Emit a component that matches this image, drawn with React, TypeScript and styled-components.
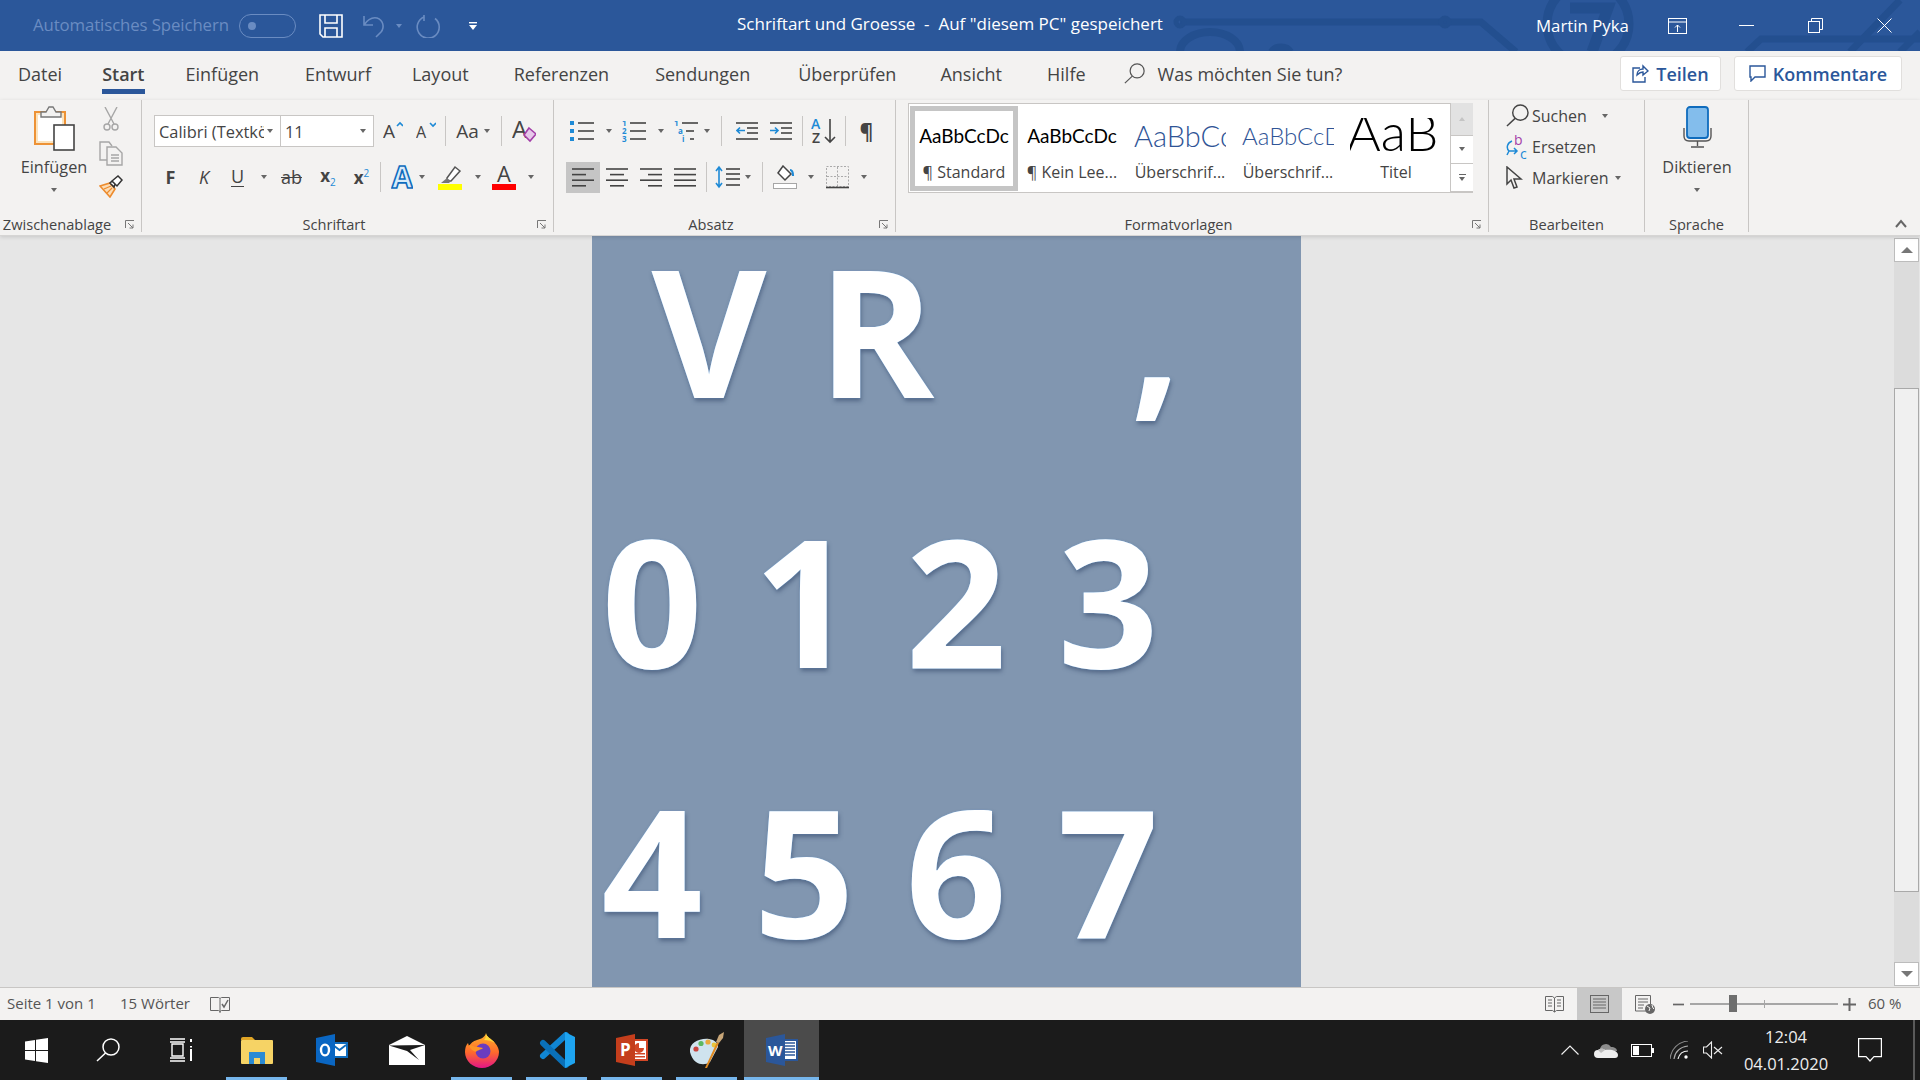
import { FC, ReactNode } from "react";
import styled, { createGlobalStyle } from "styled-components";

const UI_FONT = `"Open Sans", "Noto Sans", sans-serif`;
const BLUE = "#2b579a";
const INK = "#444444";
const ACCENT = "#1e8ad6";

const GlobalStyle = createGlobalStyle`
  html, body { margin: 0; padding: 0; height: 100%; overflow: hidden; background: #e6e6e6; }
  * { box-sizing: border-box; }
  svg { display: block; }
`;

const Window = styled.div`
  width: 1920px;
  height: 1080px;
  display: flex;
  flex-direction: column;
  font-family: ${UI_FONT};
  color: ${INK};
  overflow: hidden;
`;

/* ---------- shared bits ---------- */

const Tool = styled.span<{ $w: number; $ml?: number }>`
  flex: none;
  width: ${({ $w }) => $w}px;
  margin-left: ${({ $ml }) => $ml ?? 0}px;
  display: flex;
  justify-content: center;
  align-items: center;
`;

const Caret = styled.i<{ $ml?: number; $color?: string }>`
  flex: none;
  display: block;
  width: 0;
  height: 0;
  margin-left: ${({ $ml }) => $ml ?? 0}px;
  border-left: 3.5px solid transparent;
  border-right: 3.5px solid transparent;
  border-top: 4px solid ${({ $color }) => $color ?? "#666"};
`;

const Sep = styled.i<{ $ml: number; $h?: number }>`
  flex: none;
  display: block;
  width: 1px;
  height: ${({ $h }) => $h ?? 30}px;
  margin-left: ${({ $ml }) => $ml}px;
  background: #c8c6c4;
`;

/* ---------- title bar ---------- */

const TitleBar = styled.header`
  position: relative;
  flex: none;
  height: 51px;
  background: ${BLUE};
  color: #fff;
  display: flex;
  align-items: center;
  overflow: hidden;
`;

const Circuit = styled.svg`
  position: absolute;
  left: 0;
  top: 0;
`;

const AutoSave = styled.span`
  position: relative;
  top: -1px;
  margin-left: 33px;
  width: 198px;
  font-size: 16.8px;
  letter-spacing: -0.1px;
  color: #6a8cc2;
  white-space: nowrap;
`;

const Toggle = styled.span`
  position: relative;
  flex: none;
  width: 57px;
  height: 24px;
  margin-left: 8px;
  border: 1px solid #6a8cc2;
  border-radius: 12px;
  display: flex;
  align-items: center;
  padding-left: 8px;
  &::before {
    content: "";
    width: 8px;
    height: 8px;
    border-radius: 50%;
    background: #6a8cc2;
  }
`;

const QuickTools = styled.div`
  position: relative;
  display: flex;
  align-items: center;
`;

const DocTitle = styled.span`
  position: absolute;
  left: 737px;
  top: 13px;
  font-size: 17px;
  line-height: 22px;
  white-space: pre;
`;

const WindowTools = styled.div`
  position: relative;
  margin-left: auto;
  padding-right: 28px;
  display: flex;
  align-items: center;
`;

const UserName = styled.span`
  width: 92px;
  font-size: 16.8px;
  white-space: nowrap;
`;

/* ---------- tabs ---------- */

const TabRow = styled.nav`
  flex: none;
  height: 49px;
  background: #f3f2f1;
  display: flex;
  align-items: center;
  padding-left: 18px;
  font-size: 18px;
`;

const Tab = styled.span<{ $ml?: number; $active?: boolean }>`
  position: relative;
  margin-left: ${({ $ml }) => $ml ?? 0}px;
  white-space: nowrap;
  line-height: 24px;
  top: -2px;
  font-weight: ${({ $active }) => ($active ? 600 : 400)};
  ${({ $active }) =>
    $active &&
    `&::after {
      content: "";
      position: absolute;
      left: 0;
      right: 0;
      bottom: -8px;
      height: 5px;
      background: ${BLUE};
    }`}
`;

const SearchHint = styled.span`
  position: relative;
  top: -2px;
  display: flex;
  align-items: center;
  margin-left: 38px;
  gap: 13px;
  white-space: nowrap;
`;

const TabActions = styled.div`
  margin-left: auto;
  margin-bottom: 4px;
  padding-right: 18px;
  display: flex;
  gap: 13px;
`;

const ShareButton = styled.span<{ $w: number }>`
  width: ${({ $w }) => $w}px;
  height: 35px;
  background: #fff;
  border: 1px solid #e1dfdd;
  border-radius: 3px;
  display: flex;
  align-items: center;
  justify-content: center;
  gap: 7px;
  color: ${BLUE};
  font-weight: 600;
  font-size: 18px;
  white-space: nowrap;
`;

/* ---------- ribbon ---------- */

const Ribbon = styled.section`
  position: relative;
  z-index: 2;
  flex: none;
  height: 136px;
  background: #f3f2f1;
  display: flex;
  align-items: flex-start;
  border-bottom: 1px solid #d6d5d4;
  box-shadow: 0 1px 4px rgba(0, 0, 0, 0.14);
`;

const Group = styled.div<{ $w: number }>`
  flex: none;
  width: ${({ $w }) => $w}px;
  height: 132px;
  border-right: 1px solid #c8c6c4;
  display: flex;
  flex-direction: column;
`;

const GroupBody = styled.div<{ $pt?: number; $pl?: number; $row?: boolean }>`
  flex: 1;
  min-height: 0;
  padding-top: ${({ $pt }) => $pt ?? 0}px;
  padding-left: ${({ $pl }) => $pl ?? 0}px;
  display: flex;
  flex-direction: ${({ $row }) => ($row ? "row" : "column")};
`;

const GroupLabel = styled.div<{ $launcher?: boolean }>`
  position: relative;
  flex: none;
  height: 18px;
  margin-bottom: -1px;
  padding-right: ${({ $launcher }) => ($launcher ? 27 : 0)}px;
  text-align: center;
  font-size: 14.6px;
  line-height: 18px;
  white-space: nowrap;
`;

const Launcher = styled.svg`
  position: absolute;
  right: 6px;
  top: 5px;
`;

const ToolRow = styled.div<{ $pl?: number; $mt?: number }>`
  height: 32px;
  margin-top: ${({ $mt }) => $mt ?? 0}px;
  padding-left: ${({ $pl }) => $pl ?? 0}px;
  display: flex;
  align-items: center;
`;

const BigButton = styled.div<{ $w: number; $ml?: number }>`
  flex: none;
  width: ${({ $w }) => $w}px;
  margin-left: ${({ $ml }) => $ml ?? 0}px;
  padding-top: 6px;
  display: flex;
  flex-direction: column;
  align-items: center;
  font-size: 16.3px;
`;

const BigIconBox = styled.div`
  height: 46px;
  display: flex;
  align-items: flex-start;
`;

const BigLabel = styled.div`
  line-height: 20px;
  margin-top: 5px;
  margin-bottom: 11px;
  white-space: nowrap;
`;

const SmallColumn = styled.div`
  margin-left: 11px;
  padding-top: 7px;
  display: flex;
  flex-direction: column;
  align-items: center;
  gap: 9px;
`;

const FontBox = styled.span<{ $w: number }>`
  flex: none;
  width: ${({ $w }) => $w}px;
  height: 32px;
  background: #fff;
  border: 1px solid #c8c6c4;
  margin-right: -1px;
  display: flex;
  align-items: center;
  justify-content: space-between;
  padding: 0 7px 0 4px;
  font-size: 16.4px;
  overflow: hidden;
`;

const FontName = styled.span`
  width: 105px;
  overflow: hidden;
  white-space: nowrap;
`;

const ToggleCell = styled.span<{ $w: number; $ml?: number; $on?: boolean }>`
  flex: none;
  width: ${({ $w }) => $w}px;
  height: 31px;
  margin-left: ${({ $ml }) => $ml ?? 0}px;
  background: ${({ $on }) => ($on ? "#c5c5c5" : "transparent")};
  display: flex;
  align-items: center;
  justify-content: center;
`;

const Gallery = styled.div`
  width: 565px;
  height: 90px;
  margin: 3px 0 0 12px;
  background: #fff;
  border: 1px solid #c8c6c4;
  display: flex;
  padding: 2px 0 0 1px;
`;

const StyleCard = styled.div<{ $selected?: boolean }>`
  flex: none;
  width: 108px;
  height: 85px;
  padding: 6px 0;
  border: 5px solid ${({ $selected }) => ($selected ? "#c5c5c5" : "transparent")};
  display: flex;
  flex-direction: column;
  align-items: center;
`;

const StylePreview = styled.div<{ $size: number; $color?: string; $light?: boolean; $title?: boolean }>`
  flex: none;
  width: 92px;
  height: ${({ $title }) => ($title ? 37 : 44)}px;
  margin-top: ${({ $title }) => ($title ? 1 : -3)}px;
  margin-bottom: ${({ $title }) => ($title ? 3 : 0)}px;
  overflow: hidden;
  font-family: Lato, "Open Sans", sans-serif;
  font-size: ${({ $size }) => $size}px;
  font-weight: ${({ $light }) => ($light ? 300 : 400)};
  line-height: ${({ $title }) => ($title ? 27 : 44)}px;
  text-indent: ${({ $title }) => ($title ? -7 : 0)}px;
  color: ${({ $color }) => $color ?? "#000"};
  white-space: nowrap;
  text-align: center;
`;

const StyleName = styled.div`
  font-size: 16px;
  line-height: 20px;
  white-space: nowrap;
  margin-top: 4px;
`;

const GalleryScroll = styled.div`
  flex: none;
  width: 23px;
  margin: -3px -1px 0 auto;
  display: flex;
  flex-direction: column;
  border-left: 1px solid #c8c6c4;
`;

const GalleryArrow = styled.span<{ $h: number; $gray?: boolean }>`
  height: ${({ $h }) => $h}px;
  background: ${({ $gray }) => ($gray ? "#e2e2e2" : "#fff")};
  border-bottom: 1px solid #c8c6c4;
  display: flex;
  flex-direction: column;
  gap: 2px;
  align-items: center;
  justify-content: center;
`;

const UpCaret = styled.i`
  display: block;
  width: 0;
  height: 0;
  border-left: 3.5px solid transparent;
  border-right: 3.5px solid transparent;
  border-bottom: 4px solid #c4c4c4;
`;

const Dash = styled.i`
  display: block;
  width: 7px;
  height: 1px;
  background: #666;
`;

const EditRow = styled.div`
  height: 31px;
  padding-left: 17px;
  display: flex;
  align-items: center;
  font-size: 16px;
  white-space: nowrap;
`;

const EditIcon = styled.span`
  flex: none;
  width: 26px;
`;

const Collapse = styled.svg`
  position: absolute;
  right: 13px;
  bottom: 7px;
`;

/* ---------- document ---------- */

const Workspace = styled.main`
  flex: 1;
  min-height: 0;
  display: flex;
  background: #e6e6e6;
`;

const DocArea = styled.div`
  flex: 1;
  min-width: 0;
  display: flex;
  justify-content: center;
  overflow: hidden;
`;

const Page = styled.article`
  width: 709px;
  height: 100%;
  margin-right: 2px;
  padding: 5px 0 0 10px;
  background: #8196b0;
  overflow: hidden;
  display: flex;
  flex-direction: column;
  gap: 93px;
`;

const GlyphRow = styled.div`
  flex: none;
  height: 177px;
  display: flex;
  font-size: 177px;
  font-weight: 700;
  line-height: 177px;
  color: #fff;
  text-shadow: 0 0 1px #6fb0ee, 1px 3px 4px rgba(45, 65, 100, 0.55);
`;

const Glyph = styled.span<{ $w: number; $ml?: number }>`
  flex: none;
  width: ${({ $w }) => $w}px;
  margin-left: ${({ $ml }) => $ml ?? 0}px;
`;

const ScrollBar = styled.aside`
  flex: none;
  width: 26px;
  padding-top: 2px;
  display: flex;
  flex-direction: column;
`;

const ScrollButton = styled.span`
  width: 25px;
  height: 24px;
  background: #fff;
  border: 1px solid #bcbcbc;
  display: flex;
  align-items: center;
  justify-content: center;
`;

const ScrollTrack = styled.span<{ $h: number }>`
  width: 25px;
  height: ${({ $h }) => $h}px;
  background: #dcdcdc;
`;

const ScrollThumb = styled.span`
  width: 25px;
  height: 504px;
  background: #f0f0f0;
  border: 1px solid #a9a9a9;
`;

const ArrowUp = styled.i`
  border-left: 6px solid transparent;
  border-right: 6px solid transparent;
  border-bottom: 6px solid #777;
`;

const ArrowDown = styled.i`
  border-left: 6px solid transparent;
  border-right: 6px solid transparent;
  border-top: 6px solid #777;
`;

/* ---------- status bar ---------- */

const StatusBar = styled.footer`
  flex: none;
  height: 33px;
  background: #f3f2f1;
  border-top: 1px solid #c8c6c4;
  display: flex;
  align-items: center;
  padding-left: 7px;
  font-size: 15px;
  color: #555;
`;

const StatusText = styled.span<{ $w: number; $ml?: number }>`
  flex: none;
  position: relative;
  top: -1px;
  width: ${({ $w }) => $w}px;
  margin-left: ${({ $ml }) => $ml ?? 0}px;
  white-space: nowrap;
`;

const StatusRight = styled.div`
  margin-left: auto;
  height: 100%;
  display: flex;
  align-items: center;
  padding-right: 16px;
`;

const ActiveView = styled.span`
  flex: none;
  width: 45px;
  height: 100%;
  margin-left: 13px;
  background: #c8c8c8;
  display: flex;
  align-items: center;
  justify-content: center;
`;

const ZoomSlider = styled.span`
  position: relative;
  flex: none;
  width: 148px;
  height: 2px;
  margin-left: 6px;
  background: #a6a6a6;
`;

const ZoomThumb = styled.i`
  position: absolute;
  left: 39px;
  top: -8px;
  width: 8px;
  height: 17px;
  background: #6e6e6e;
`;

const ZoomTick = styled.i`
  position: absolute;
  left: 74px;
  top: -3px;
  width: 1px;
  height: 8px;
  background: #a6a6a6;
`;

/* ---------- task bar ---------- */

const TaskBar = styled.footer`
  flex: none;
  height: 60px;
  background: #1b1b1b;
  display: flex;
  align-items: stretch;
  color: #eee;
`;

const TaskCell = styled.span<{ $w?: number; $open?: boolean; $active?: boolean }>`
  position: relative;
  flex: none;
  width: ${({ $w }) => $w ?? 75}px;
  display: flex;
  align-items: center;
  justify-content: center;
  background: ${({ $active }) => ($active ? "#4b4b4b" : "transparent")};
  ${({ $open, $active }) =>
    $open &&
    `&::after {
      content: "";
      position: absolute;
      bottom: 0;
      height: 3px;
      left: ${$active ? 0 : 7}px;
      right: ${$active ? 0 : 7}px;
      background: #76b6ec;
    }`}
`;

const Tray = styled.div`
  margin-left: auto;
  display: flex;
  align-items: center;
`;

const Clock = styled.div`
  flex: none;
  width: 88px;
  margin-left: 19px;
  text-align: center;
  font-size: 16.5px;
  line-height: 27px;
  white-space: nowrap;
`;

const TrayEdge = styled.i`
  flex: none;
  width: 2px;
  height: 60px;
  margin: 0 5px 0 31px;
  background: #5a5a5a;
`;

/* ---------- drawn icons ---------- */

const Line: FC<{ x1: number; x2: number; y: number; c?: string; w?: number }> = ({ x1, x2, y, c = "#444", w = 1.6 }) => (
  <line x1={x1} x2={x2} y1={y} y2={y} stroke={c} strokeWidth={w} />
);

const SaveIcon = () => (
  <svg width="24" height="24" viewBox="0 0 24 24" fill="none" stroke="#fff" strokeWidth="1.6">
    <path d="M1 1h22v22H4l-3-3z" />
    <path d="M6 1v8h12V1M6 23v-9h12v9" />
  </svg>
);

const UndoIcon = () => (
  <svg width="22" height="24" viewBox="0 0 22 24" fill="none" stroke="#6a8cc2" strokeWidth="1.6">
    <path d="M1 2v9h9M1 11C5 5 9 3 14 4c6 2 8 9 4 14l-5 5" />
  </svg>
);

const RedoIcon = () => (
  <svg width="25" height="24" viewBox="0 0 25 24" fill="none" stroke="#6a8cc2" strokeWidth="1.6">
    <path d="M8 3a11 11 0 1 0 11 1.5" />
    <path d="M8 1v6" />
  </svg>
);

const CustomizeIcon = () => (
  <svg width="8" height="8" viewBox="0 0 8 8" fill="#fff">
    <rect x="0" y="0" width="8" height="1.4" />
    <path d="M0 3h8L4 8z" />
  </svg>
);

const RibbonDisplayIcon = () => (
  <svg width="19" height="16" viewBox="0 0 19 16" fill="none" stroke="#fff" strokeWidth="1">
    <rect x=".5" y=".5" width="18" height="15" />
    <path d="M1 4h17M9.5 14V7M7 9.5l2.5-2.5L12 9.5" />
  </svg>
);

const MinimizeIcon = () => (
  <svg width="15" height="2" viewBox="0 0 15 2"><rect width="15" height="1" fill="#fff" /></svg>
);

const RestoreIcon = () => (
  <svg width="15" height="15" viewBox="0 0 15 15" fill="none" stroke="#fff" strokeWidth="1">
    <rect x=".5" y="3.5" width="11" height="11" />
    <path d="M3.5 3V.5h11v11H12" />
  </svg>
);

const CloseIcon = () => (
  <svg width="15" height="15" viewBox="0 0 15 15" stroke="#fff" strokeWidth="1"><path d="M.5.5l14 14M14.5.5l-14 14" /></svg>
);

const SearchGlyph: FC<{ size: number; c?: string; w?: number }> = ({ size, c = "#555", w = 1.4 }) => (
  <svg width={size} height={size} viewBox="0 0 24 24" fill="none" stroke={c} strokeWidth={w}>
    <circle cx="15" cy="9" r="8" />
    <path d="M9.5 15L1 23" />
  </svg>
);

const ShareIcon = () => (
  <svg width="17" height="19" viewBox="0 0 17 19" fill="none" stroke={BLUE} strokeWidth="1.4">
    <path d="M8 4H1v14h12v-5" />
    <path d="M5 11c0-4 3-6 6-6V2l5 5-5 4V8c-2 0-4 1-6 3z" />
  </svg>
);

const CommentIcon = () => (
  <svg width="17" height="17" viewBox="0 0 17 17" fill="none" stroke={BLUE} strokeWidth="1.4">
    <path d="M1 1h15v11H6l-4 4v-4H1z" />
  </svg>
);

const PasteIcon = () => (
  <svg width="41" height="45" viewBox="0 0 41 45" fill="none">
    <rect x="1" y="6" width="30" height="32" fill="#fbe3bd" stroke="#ed9235" strokeWidth="2" />
    <rect x="4" y="9" width="24" height="26" fill="#fff" />
    <path d="M7 11V6h5l3-5h4l3 5h5v5z" fill="#f3f2f1" stroke="#777" strokeWidth="1.4" />
    <rect x="20" y="19" width="20" height="25" fill="#fff" stroke="#444" strokeWidth="1.6" />
  </svg>
);

const CutIcon = () => (
  <svg width="16" height="25" viewBox="0 0 16 25" fill="none" stroke="#a6a6a6" strokeWidth="1.4">
    <path d="M2 0l9 17M14 0L5 17" />
    <circle cx="4" cy="20" r="3" />
    <circle cx="12" cy="20" r="3" />
  </svg>
);

const CopyIcon = () => (
  <svg width="24" height="25" viewBox="0 0 24 25" fill="none" stroke="#a6a6a6" strokeWidth="1.4">
    <path d="M8 19H1V1h9l3 4" />
    <path d="M8 6h9l6 6v12H8z" />
    <path d="M12 14h8M12 17h8M12 20h8" />
  </svg>
);

const PainterIcon = () => (
  <svg width="24" height="23" viewBox="0 0 24 23">
    <path d="M1 11l10-3 5 6-5 8z" fill="#fbdcb5" stroke="#ed8b2d" strokeWidth="1.6" />
    <path d="M5 14l7-3M8 18l5-5" stroke="#ed8b2d" strokeWidth="1.2" />
    <path d="M11 8l2-2 3 3-1 3zM13 6l6-5 4 4-5 6-2-2" fill="#fff" stroke="#333" strokeWidth="1.5" />
  </svg>
);

const GrowIcon: FC<{ down?: boolean }> = ({ down }) => (
  <svg width="20" height="20" viewBox="0 0 20 20" fill="none">
    <text x="0" y="17" fontFamily={UI_FONT} fontSize={down ? 16 : 19} fill="#444">A</text>
    <path d={down ? "M14 2l3 3 3-3" : "M14 5l3-3 3 3"} stroke={ACCENT} strokeWidth="1.6" />
  </svg>
);

const ClearIcon = () => (
  <svg width="24" height="23" viewBox="0 0 24 23" fill="none">
    <text x="0" y="18" fontFamily={UI_FONT} fontSize="24" fill="#444">A</text>
    <path d="M17 8l7 6-6 7-6-6z" fill="#e6c8ea" stroke="#a33ea8" strokeWidth="1.6" />
  </svg>
);

const BoldGlyph = styled.span`
  font-size: 18px;
  font-weight: 700;
  line-height: 1;
`;

const ItalicGlyph = styled.span`
  font-size: 18px;
  font-style: italic;
  line-height: 1;
`;

const UnderGlyph = styled.span`
  font-size: 18px;
  line-height: 19px;
  border-bottom: 1.5px solid #444;
`;

const StrikeGlyph = styled.span`
  font-size: 18px;
  line-height: 1;
  text-decoration: line-through;
`;

const ScriptGlyph = styled.span`
  font-size: 17px;
  font-weight: 700;
  line-height: 1;
  sub, sup {
    font-size: 10px;
    font-weight: 400;
    color: ${ACCENT};
  }
`;

const CaseGlyph = styled.span`
  font-size: 19px;
  line-height: 1;
`;

const TextEffectIcon = () => (
  <svg width="22" height="25" viewBox="0 0 22 25">
    <text x="11" y="23" textAnchor="middle" fontFamily={UI_FONT} fontWeight="700" fontSize="30" fill="#d8ecfa" stroke="#0f6cbd" strokeWidth="1.6">A</text>
  </svg>
);

const HighlightIcon = () => (
  <svg width="24" height="25" viewBox="0 0 24 25">
    <path d="M9 13L17 2l5 4-9 10H9z" fill="#fff" stroke="#555" strokeWidth="1.5" />
    <path d="M3 18l6-5 4 3-2 2z" fill="#777" />
    <rect y="19" width="24" height="6" fill="#ffff00" />
  </svg>
);

const FontColorIcon = () => (
  <svg width="24" height="25" viewBox="0 0 24 25">
    <text x="12" y="17" textAnchor="middle" fontFamily={UI_FONT} fontSize="22" fill="#444">A</text>
    <rect y="19" width="24" height="6" fill="#ff0000" />
  </svg>
);

const listY = [2, 10, 18];

const BulletIcon = () => (
  <svg width="24" height="20" viewBox="0 0 24 20">
    {listY.map((y) => (
      <g key={y}>
        <rect x="0" y={y - 2} width="4" height="4" fill={ACCENT} />
        <Line x1={8} x2={24} y={y} />
      </g>
    ))}
  </svg>
);

const NumberIcon = () => (
  <svg width="24" height="21" viewBox="0 0 24 21">
    {listY.map((y, i) => (
      <g key={y}>
        <text x="0" y={y + 3} fontFamily={UI_FONT} fontSize="8" fontWeight="700" fill={ACCENT}>{i + 1}</text>
        <Line x1={8} x2={24} y={y} />
      </g>
    ))}
  </svg>
);

const MultiIcon = () => (
  <svg width="25" height="21" viewBox="0 0 25 21">
    {["1", "a", "i"].map((n, i) => (
      <g key={n}>
        <text x={i * 4} y={listY[i] + 3} fontFamily={UI_FONT} fontSize="8" fontWeight="700" fill={ACCENT}>{n}</text>
        <Line x1={8 + i * 4} x2={20 + (i === 0 ? 4 : 0)} y={listY[i]} />
      </g>
    ))}
  </svg>
);

const IndentIcon: FC<{ out?: boolean }> = ({ out }) => (
  <svg width="22" height="20" viewBox="0 0 22 20" fill="none">
    <Line x1={0} x2={22} y={2} />
    <Line x1={11} x2={22} y={7} />
    <Line x1={11} x2={22} y={12} />
    <Line x1={0} x2={22} y={18} />
    <path d={out ? "M9 9.5H1M4 6.5l-3 3 3 3" : "M0 9.5h8M5 6.5l3 3-3 3"} stroke={ACCENT} strokeWidth="1.6" />
  </svg>
);

const SortIcon = () => (
  <svg width="26" height="26" viewBox="0 0 26 26" fill="none">
    <text x="0" y="11" fontFamily={UI_FONT} fontSize="14" fontWeight="600" fill={ACCENT}>A</text>
    <text x="1" y="25" fontFamily={UI_FONT} fontSize="14" fontWeight="600" fill="#444">Z</text>
    <path d="M19 1v23M14 19l5 5 5-5" stroke="#444" strokeWidth="1.6" />
  </svg>
);

const Pilcrow = styled.span`
  font-size: 21px;
  font-weight: 700;
  line-height: 1;
`;

const AlignIcon: FC<{ rows: [number, number][] }> = ({ rows }) => (
  <svg width="22" height="21" viewBox="0 0 22 21">
    {rows.map(([a, b], i) => (
      <Line key={i} x1={a} x2={b} y={2 + i * 5.6} />
    ))}
  </svg>
);

const LineSpacingIcon = () => (
  <svg width="25" height="24" viewBox="0 0 25 24" fill="none">
    <path d="M4 2v20M1 6l3-4 3 4M1 18l3 4 3-4" stroke={ACCENT} strokeWidth="1.6" />
    <Line x1={11} x2={25} y={4} />
    <Line x1={11} x2={25} y={9} />
    <Line x1={11} x2={25} y={14} />
    <Line x1={11} x2={25} y={20} />
  </svg>
);

const ShadingIcon = () => (
  <svg width="24" height="24" viewBox="0 0 24 24" fill="none">
    <path d="M10 1l8 8-6 6-7-7z" fill="#fff" stroke="#444" strokeWidth="1.5" />
    <path d="M17 5c3 0 3 3 3 6" stroke={ACCENT} strokeWidth="2.2" />
    <rect x=".5" y="18.5" width="23" height="5" fill="#fff" stroke="#a6a6a6" />
  </svg>
);

const BordersIcon = () => (
  <svg width="23" height="24" viewBox="0 0 23 24" fill="none">
    <rect x=".5" y="1.5" width="22" height="20" stroke="#aaa" strokeDasharray="2 1.5" />
    <path d="M11.5 2v20M1 11.5h21" stroke="#aaa" strokeDasharray="2 1.5" />
    <path d="M0 22.5h23" stroke="#444" strokeWidth="1.6" />
  </svg>
);

const ReplaceIcon = () => (
  <svg width="23" height="24" viewBox="0 0 23 24" fill="none">
    <text x="8" y="10" fontFamily={UI_FONT} fontSize="14" fill="#a33ea8">b</text>
    <text x="14" y="24" fontFamily={UI_FONT} fontSize="14" fill={ACCENT}>c</text>
    <path d="M6 6C1 8 0 13 3 16l8 0M8 13l3 3-3 3M3 16l-2 4" stroke={ACCENT} strokeWidth="1.5" />
  </svg>
);

const CursorIcon = () => (
  <svg width="17" height="23" viewBox="0 0 17 23" fill="none" stroke="#444" strokeWidth="1.5">
    <path d="M1 1v17l4-4 3 8 3-1-3-8h7z" />
  </svg>
);

const MicIcon = () => (
  <svg width="29" height="42" viewBox="0 0 29 42" fill="none">
    <rect x="4" y="1" width="21" height="31" rx="3" fill="#83bdec" stroke="#0f6cbd" strokeWidth="1.8" />
    <path d="M1 22v8c0 3 2 5 5 5h17c3 0 5-2 5-5v-8" stroke="#555" strokeWidth="1.4" />
    <path d="M14.5 35v5M8 41h13" stroke="#555" strokeWidth="1.4" />
  </svg>
);

const ReadIcon = () => (
  <svg width="19" height="18" viewBox="0 0 19 18" fill="none" stroke="#666" strokeWidth="1">
    <path d="M.5 1.5h7l2 1.5 2-1.5h7v14h-7l-2 1.5-2-1.5h-7zM9.5 3v14" />
    <path d="M3 5h4M3 8h4M3 11h4M12 5h4M12 8h4M12 11h4" />
  </svg>
);

const PrintIcon = () => (
  <svg width="19" height="18" viewBox="0 0 19 18" fill="none" stroke="#666" strokeWidth="1">
    <rect x=".5" y=".5" width="18" height="17" />
    <path d="M3 4h13M3 7h13M3 10h13M3 13h13" />
  </svg>
);

const WebIcon = () => (
  <svg width="20" height="19" viewBox="0 0 20 19" fill="none">
    <path d="M11 16H.5V.5h15V9M3 4h10M3 7h10M3 10h6M3 13h5" stroke="#666" strokeWidth="1" />
    <circle cx="15" cy="14" r="5" fill="#666" />
    <path d="M12 11l3 2-1 3M17 10l1 3 1 1" stroke="#f3f2f1" strokeWidth="1" />
  </svg>
);

const ProofIcon = () => (
  <svg width="20" height="19" viewBox="0 0 20 19" fill="none" stroke="#666" strokeWidth="1">
    <path d="M.5 2.5h8l1.5 1 1.5-1h8v13h-8l-1.5 1-1.5-1h-8zM10 4v14" />
    <path d="M12 9l2 3 4-7" strokeWidth="1.5" />
  </svg>
);

const PlusMinus: FC<{ plus?: boolean }> = ({ plus }) => (
  <svg width="13" height="13" viewBox="0 0 13 13" stroke="#666" strokeWidth="2">
    <path d="M0 6.5h13" />
    {plus && <path d="M6.5 0v13" />}
  </svg>
);

const WindowsLogo = () => (
  <svg width="23" height="25" viewBox="0 0 23 25" fill="#fff">
    <path d="M0 3.5l10-1.5v10H0zM11 1.8L23 0v12H11zM0 13h10v10L0 21.500zM11 13h12v12l-12-1.800z" />
  </svg>
);

const TaskViewIcon = () => (
  <svg width="23" height="24" viewBox="0 0 23 24" fill="none" stroke="#fff" strokeWidth="1.4">
    <path d="M0 1h15M0 23h15M2 6h11v12H2zM0 4h15M0 20h15" />
    <path d="M21 1v3M21 8v1.500M21 11v12" strokeWidth="2" />
  </svg>
);

const ExplorerIcon = () => (
  <svg width="32" height="27" viewBox="0 0 32 27">
    <path d="M0 2a2 2 0 0 1 2-2h9l3 3H0z" fill="#e0a526" />
    <rect y="3" width="32" height="24" rx="1" fill="#f6d365" />
    <path d="M8 27V15h16v12h-5v-6h-6v6z" fill="#2a8ad4" />
  </svg>
);

const OutlookIcon = () => (
  <svg width="32" height="32" viewBox="0 0 32 32">
    <rect x="15" y="8" width="17" height="16" fill="#0f6cbd" />
    <rect x="17" y="10" width="13" height="12" fill="#fff" />
    <path d="M17 11l6.500 5 6.500-5" stroke="#0f6cbd" strokeWidth="1.8" fill="none" />
    <path d="M0 4l19-4v32L0 28z" fill="#0a66c2" />
    <ellipse cx="9" cy="16" rx="4" ry="5.400" fill="none" stroke="#fff" strokeWidth="2.400" />
  </svg>
);

const MailIcon = () => (
  <svg width="36" height="29" viewBox="0 0 36 29">
    <path d="M0 9L18 0l18 9v20H0z" fill="#fff" />
    <path d="M0 9.500L36 9l-15 5 9 10-12-9z" fill="#1b1b1b" />
  </svg>
);

const FirefoxIcon = () => (
  <svg width="34" height="35" viewBox="0 0 34 35">
    <defs>
      <linearGradient id="ffBody" x1="0" y1="0" x2="0" y2="1">
        <stop offset="0" stopColor="#ffb52e" />
        <stop offset=".55" stopColor="#ff6a2b" />
        <stop offset="1" stopColor="#e31587" />
      </linearGradient>
    </defs>
    <path d="M21 0c0 4 5 5 9 10 3 3 4 7 4 9 0 9-8 16-17 16S0 28 0 19c0-4 1-7 3-9l1 3c2-3 4-5 8-6 4-1 8-3 9-7z" fill="url(#ffBody)" />
    <circle cx="18" cy="18" r="7.500" fill="#6a3cc0" />
    <path d="M4 12c3 0 4 2 9 2l5 1c-2 2-6 2-7 4-3-1-6-3-7-7z" fill="#ff9526" />
    <path d="M21 0c0 4 5 5 9 10-3-2-7-3-11-3 2-2 2-4 2-7z" fill="#ffd83b" />
  </svg>
);

const CodeIcon = () => (
  <svg width="36" height="36" viewBox="0 0 36 36" fill="none">
    <path d="M27 3L4 24" stroke="#1085d2" strokeWidth="6" strokeLinecap="round" />
    <path d="M4 11l23 22" stroke="#0a70b8" strokeWidth="6" strokeLinecap="round" />
    <path d="M26 0l10 5v26l-10 5V27L26 9z" fill="#1ea4f0" />
  </svg>
);

const PowerPointIcon = () => (
  <svg width="32" height="32" viewBox="0 0 32 32">
    <rect x="14" y="5" width="18" height="22" fill="#d24726" />
    <rect x="16" y="7" width="14" height="18" fill="#fff" />
    <path d="M23 9a5 5 0 1 0 5 5h-5z" fill="#d24726" />
    <path d="M19 19h10v1.500H19zM19 22h10v1.500H19z" fill="#d24726" />
    <path d="M0 4l19-4v32L0 28z" fill="#c43e1c" />
    <text x="4" y="22" fontFamily={UI_FONT} fontSize="17" fontWeight="700" fill="#fff">P</text>
  </svg>
);

const PaintIcon = () => (
  <svg width="35" height="36" viewBox="0 0 35 36">
    <path d="M1 20C0 11 10 6 20 7c6 1 9 4 9 8l-8 15c-4 3-10 3-14 0-3-2-5-6-6-10z" fill="#cfe3ee" />
    <circle cx="7" cy="17" r="2.600" fill="#c9453f" />
    <circle cx="12" cy="11.500" r="2.600" fill="#5cb860" />
    <circle cx="19" cy="10" r="2.600" fill="#e9a93b" />
    <circle cx="25" cy="13" r="2.400" fill="#e9c33b" />
    <path d="M16 36l12-26 2 1-12 25z" fill="#e08a22" />
    <path d="M27 10l3-7 5-3-1 6-4 5z" fill="#c8a678" />
  </svg>
);

const WordIcon = () => (
  <svg width="32" height="32" viewBox="0 0 32 32">
    <rect x="14" y="5" width="18" height="22" fill="#2b579a" />
    <rect x="16" y="7" width="14" height="18" fill="#fff" />
    <path d="M19 9h10M19 12h10M19 15h10M19 18h10M19 21h10" stroke="#2b579a" strokeWidth="1.600" />
    <path d="M0 4l19-4v32L0 28z" fill="#2b579a" />
    <text x="2" y="22" fontFamily={UI_FONT} fontSize="15" fontWeight="700" fill="#fff">W</text>
  </svg>
);

const TrayChevron = () => (
  <svg width="18" height="10" viewBox="0 0 18 10" fill="none" stroke="#eee" strokeWidth="1.2"><path d="M.5 9.500L9 1l8.500 8.500" /></svg>
);

const CloudIcon = () => (
  <svg width="24" height="15" viewBox="0 0 24 15">
    <path d="M6 6a6 6 0 0 1 11-2c4 0 6 2 6 4H6z" fill="#8d8d8d" />
    <path d="M4 15a4 4 0 0 1 0-8c2-1 4-2 7 0 5-1 13 0 13 5a3 3 0 0 1-3 3z" fill="#eee" />
    <path d="M4 7c2-1 4-2 7 0l-4 3z" fill="#bdbdbd" />
  </svg>
);

const BatteryIcon = () => (
  <svg width="23" height="13" viewBox="0 0 23 13">
    <rect x=".5" y=".5" width="20" height="12" fill="none" stroke="#fff" />
    <rect x="2" y="2" width="6" height="9" fill="#fff" />
    <rect x="21" y="4" width="2" height="5" fill="#fff" />
  </svg>
);

const WifiIcon = () => (
  <svg width="18" height="18" viewBox="0 0 18 18" fill="none" strokeWidth="1.2">
    <path d="M0 18C1 8 8 1 18 0" stroke="#8a8a8a" />
    <path d="M4 18c1-7 6-12 14-13" stroke="#aaa" />
    <path d="M8 18c1-4 4-8 10-8" stroke="#eee" />
    <circle cx="16" cy="16" r="1.700" fill="#fff" />
  </svg>
);

const SpeakerIcon = () => (
  <svg width="20" height="18" viewBox="0 0 20 18" fill="none" stroke="#eee" strokeWidth="1.1">
    <path d="M.5 6v6h3l5 5V1l-5 5zM11 6l8 7M19 6l-8 7" />
  </svg>
);

const NoticeIcon = () => (
  <svg width="24" height="24" viewBox="0 0 24 24" fill="none" stroke="#fff" strokeWidth="1.2">
    <path d="M.6.6h22.800v18h-7.400L12 23l-4-4.400H.6z" />
  </svg>
);

const LauncherIcon = () => (
  <Launcher width="10" height="9" viewBox="0 0 10 9" fill="none" stroke="#777" strokeWidth="1">
    <path d="M.5 8V.5H9M3 3l5 5M8 4.500V8H4.500" />
  </Launcher>
);

const SectionLabel: FC<{ children: ReactNode; launcher?: boolean }> = ({ children, launcher }) => (
  <GroupLabel $launcher={launcher}>
    {children}
    {launcher && <LauncherIcon />}
  </GroupLabel>
);

const TABS: [string, number][] = [
  ["Einfügen", 41],
  ["Entwurf", 46],
  ["Layout", 41],
  ["Referenzen", 45],
  ["Sendungen", 46],
  ["Überprüfen", 48],
  ["Ansicht", 44],
  ["Hilfe", 45],
];

const LEFT: [number, number][] = [[0, 22], [0, 14], [0, 22], [0, 14]];
const CENTER: [number, number][] = [[0, 22], [4, 18], [0, 22], [4, 18]];
const RIGHT: [number, number][] = [[0, 22], [8, 22], [0, 22], [8, 22]];
const JUSTIFY: [number, number][] = [[0, 22], [0, 22], [0, 22], [0, 22]];

const STYLES = [
  { name: "¶ Standard", text: "AaBbCcDc", size: 19, selected: true },
  { name: "¶ Kein Lee...", text: "AaBbCcDc", size: 19 },
  { name: "Überschrif...", text: "AaBbCc", size: 29, color: "#2f5496", light: true },
  { name: "Überschrif...", text: "AaBbCcD", size: 24, color: "#2f5496", light: true },
];

const App: FC = () => (
  <Window>
    <GlobalStyle />

    <TitleBar>
      <Circuit width="1920" height="51" viewBox="0 0 1920 51" fill="none" stroke="#234f8f" strokeWidth="7">
        <path d="M1180 22h263l10 0 28 0 35 30" />
        <circle cx="1180" cy="22" r="4" strokeWidth="5" />
        <circle cx="1445" cy="22" r="4" strokeWidth="5" />
        <path d="M1180 52a30 20 0 0 1 60 0M1272 52a10 8 0 0 1 18 0" strokeWidth="8" />
        <circle cx="1588" cy="24" r="41" strokeWidth="9" />
        <path d="M1570 8h38l-16 44" strokeWidth="11" />
        <path d="M1747 52l14-13h159M1850 52l50-52M1900 52l20-20" />
      </Circuit>
      <AutoSave>Automatisches Speichern</AutoSave>
      <Toggle />
      <QuickTools>
        <Tool $w={24} $ml={23}><SaveIcon /></Tool>
        <Tool $w={22} $ml={20}><UndoIcon /></Tool>
        <Tool $w={8} $ml={10}><Caret $color="#6a8cc2" /></Tool>
        <Tool $w={25} $ml={13}><RedoIcon /></Tool>
        <Tool $w={8} $ml={28}><CustomizeIcon /></Tool>
      </QuickTools>
      <DocTitle>{`Schriftart und Groesse  -  Auf "diesem PC" gespeichert`}</DocTitle>
      <WindowTools>
        <UserName>Martin Pyka</UserName>
        <Tool $w={19} $ml={40}><RibbonDisplayIcon /></Tool>
        <Tool $w={15} $ml={52}><MinimizeIcon /></Tool>
        <Tool $w={15} $ml={54}><RestoreIcon /></Tool>
        <Tool $w={15} $ml={54}><CloseIcon /></Tool>
      </WindowTools>
    </TitleBar>

    <TabRow>
      <Tab>Datei</Tab>
      <Tab $ml={40} $active>Start</Tab>
      {TABS.map(([label, ml]) => (
        <Tab key={label} $ml={ml}>{label}</Tab>
      ))}
      <SearchHint>
        <SearchGlyph size={21} />
        Was möchten Sie tun?
      </SearchHint>
      <TabActions>
        <ShareButton $w={101}><ShareIcon />Teilen</ShareButton>
        <ShareButton $w={168}><CommentIcon />Kommentare</ShareButton>
      </TabActions>
    </TabRow>

    <Ribbon>
      <Group $w={142}>
        <GroupBody $row>
          <BigButton $w={68} $ml={20}>
            <BigIconBox><PasteIcon /></BigIconBox>
            <BigLabel>Einfügen</BigLabel>
            <Caret />
          </BigButton>
          <SmallColumn>
            <CutIcon />
            <CopyIcon />
            <PainterIcon />
          </SmallColumn>
        </GroupBody>
        <SectionLabel launcher>Zwischenablage</SectionLabel>
      </Group>

      <Group $w={412}>
        <GroupBody $pt={15}>
          <ToolRow $pl={12}>
            <FontBox $w={127}>
              <FontName>Calibri (Textkörper)</FontName>
              <Caret />
            </FontBox>
            <FontBox $w={94}>
              <span>11</span>
              <Caret />
            </FontBox>
            <Tool $w={20} $ml={10}><GrowIcon /></Tool>
            <Tool $w={20} $ml={13}><GrowIcon down /></Tool>
            <Sep $ml={9} />
            <Tool $w={25} $ml={9}><CaseGlyph>Aa</CaseGlyph></Tool>
            <Caret $ml={4} />
            <Sep $ml={11} />
            <Tool $w={24} $ml={10}><ClearIcon /></Tool>
          </ToolRow>
          <ToolRow $pl={23} $mt={14}>
            <Tool $w={11}><BoldGlyph>F</BoldGlyph></Tool>
            <Tool $w={12} $ml={22}><ItalicGlyph>K</ItalicGlyph></Tool>
            <Tool $w={13} $ml={21}><UnderGlyph>U</UnderGlyph></Tool>
            <Caret $ml={17} />
            <Tool $w={23} $ml={13}><StrikeGlyph>ab</StrikeGlyph></Tool>
            <Tool $w={18} $ml={16}><ScriptGlyph>x<sub>2</sub></ScriptGlyph></Tool>
            <Tool $w={17} $ml={16}><ScriptGlyph>x<sup>2</sup></ScriptGlyph></Tool>
            <Sep $ml={10} />
            <Tool $w={22} $ml={10}><TextEffectIcon /></Tool>
            <Caret $ml={6} />
            <Tool $w={24} $ml={13}><HighlightIcon /></Tool>
            <Caret $ml={13} />
            <Tool $w={24} $ml={11}><FontColorIcon /></Tool>
            <Caret $ml={12} />
          </ToolRow>
        </GroupBody>
        <SectionLabel launcher>Schriftart</SectionLabel>
      </Group>

      <Group $w={342}>
        <GroupBody $pt={15}>
          <ToolRow $pl={16}>
            <Tool $w={24}><BulletIcon /></Tool>
            <Caret $ml={12} />
            <Tool $w={24} $ml={10}><NumberIcon /></Tool>
            <Caret $ml={12} />
            <Tool $w={25} $ml={10}><MultiIcon /></Tool>
            <Caret $ml={5} />
            <Sep $ml={11} />
            <Tool $w={22} $ml={14}><IndentIcon out /></Tool>
            <Tool $w={22} $ml={12}><IndentIcon /></Tool>
            <Sep $ml={10} />
            <Tool $w={26} $ml={8}><SortIcon /></Tool>
            <Sep $ml={8} />
            <Tool $w={15} $ml={13}><Pilcrow>¶</Pilcrow></Tool>
          </ToolRow>
          <ToolRow $pl={12} $mt={14}>
            <ToggleCell $w={34} $on><AlignIcon rows={LEFT} /></ToggleCell>
            <Tool $w={22} $ml={6}><AlignIcon rows={CENTER} /></Tool>
            <Tool $w={22} $ml={12}><AlignIcon rows={RIGHT} /></Tool>
            <Tool $w={22} $ml={12}><AlignIcon rows={JUSTIFY} /></Tool>
            <Sep $ml={10} />
            <Tool $w={25} $ml={8}><LineSpacingIcon /></Tool>
            <Caret $ml={5} />
            <Sep $ml={11} />
            <Tool $w={24} $ml={10}><ShadingIcon /></Tool>
            <Caret $ml={11} />
            <Tool $w={23} $ml={12}><BordersIcon /></Tool>
            <Caret $ml={12} />
          </ToolRow>
        </GroupBody>
        <SectionLabel launcher>Absatz</SectionLabel>
      </Group>

      <Group $w={593}>
        <GroupBody>
          <Gallery>
            {STYLES.map((item, i) => (
              <StyleCard key={i} $selected={item.selected}>
                <StylePreview $size={item.size} $color={item.color} $light={item.light}>{item.text}</StylePreview>
                <StyleName>{item.name}</StyleName>
              </StyleCard>
            ))}
            <StyleCard>
              <StylePreview $size={52} $title $light>AaB</StylePreview>
              <StyleName>Titel</StyleName>
            </StyleCard>
            <GalleryScroll>
              <GalleryArrow $h={33} $gray><UpCaret /></GalleryArrow>
              <GalleryArrow $h={29}><Caret /></GalleryArrow>
              <GalleryArrow $h={28}><Dash /><Caret /></GalleryArrow>
            </GalleryScroll>
          </Gallery>
        </GroupBody>
        <SectionLabel launcher>Formatvorlagen</SectionLabel>
      </Group>

      <Group $w={156}>
        <GroupBody>
          <EditRow>
            <EditIcon><SearchGlyph size={23} c="#444" w={1.5} /></EditIcon>
            Suchen
            <Caret $ml={15} />
          </EditRow>
          <EditRow>
            <EditIcon><ReplaceIcon /></EditIcon>
            Ersetzen
          </EditRow>
          <EditRow>
            <EditIcon><CursorIcon /></EditIcon>
            Markieren
            <Caret $ml={6} />
          </EditRow>
        </GroupBody>
        <SectionLabel>Bearbeiten</SectionLabel>
      </Group>

      <Group $w={104}>
        <GroupBody $row>
          <BigButton $w={104}>
            <BigIconBox><MicIcon /></BigIconBox>
            <BigLabel>Diktieren</BigLabel>
            <Caret />
          </BigButton>
        </GroupBody>
        <SectionLabel>Sprache</SectionLabel>
      </Group>

      <Collapse width="12" height="9" viewBox="0 0 12 9" fill="none" stroke="#666" strokeWidth="2">
        <path d="M1 8l5-6 5 6" />
      </Collapse>
    </Ribbon>

    <Workspace>
      <DocArea>
        <Page>
          <GlyphRow>
            <Glyph $w={166} $ml={50}>V</Glyph>
            <Glyph $w={313}>R</Glyph>
            <Glyph $w={60}>,</Glyph>
          </GlyphRow>
          <GlyphRow>
            {["0", "1", "2", "3"].map((d) => <Glyph key={d} $w={152}>{d}</Glyph>)}
          </GlyphRow>
          <GlyphRow>
            {["4", "5", "6", "7"].map((d) => <Glyph key={d} $w={152}>{d}</Glyph>)}
          </GlyphRow>
        </Page>
      </DocArea>
      <ScrollBar>
        <ScrollButton><ArrowUp /></ScrollButton>
        <ScrollTrack $h={126} />
        <ScrollThumb />
        <ScrollTrack $h={70} />
        <ScrollButton><ArrowDown /></ScrollButton>
      </ScrollBar>
    </Workspace>

    <StatusBar>
      <StatusText $w={88}>Seite 1 von 1</StatusText>
      <StatusText $w={70} $ml={25}>15 Wörter</StatusText>
      <Tool $w={20} $ml={20}><ProofIcon /></Tool>
      <StatusRight>
        <Tool $w={19}><ReadIcon /></Tool>
        <ActiveView><PrintIcon /></ActiveView>
        <Tool $w={20} $ml={13}><WebIcon /></Tool>
        <Tool $w={11} $ml={18}><PlusMinus /></Tool>
        <ZoomSlider><ZoomThumb /><ZoomTick /></ZoomSlider>
        <Tool $w={13} $ml={5}><PlusMinus plus /></Tool>
        <StatusText $w={36} $ml={12}>60 %</StatusText>
      </StatusRight>
    </StatusBar>

    <TaskBar>
      <TaskCell $w={72}><WindowsLogo /></TaskCell>
      <TaskCell $w={72}><SearchGlyph size={24} c="#fff" w={1.5} /></TaskCell>
      <TaskCell $w={75}><TaskViewIcon /></TaskCell>
      <TaskCell $open><ExplorerIcon /></TaskCell>
      <TaskCell><OutlookIcon /></TaskCell>
      <TaskCell><MailIcon /></TaskCell>
      <TaskCell $open><FirefoxIcon /></TaskCell>
      <TaskCell $open><CodeIcon /></TaskCell>
      <TaskCell $open><PowerPointIcon /></TaskCell>
      <TaskCell $open><PaintIcon /></TaskCell>
      <TaskCell $open $active><WordIcon /></TaskCell>
      <Tray>
        <Tool $w={18}><TrayChevron /></Tool>
        <Tool $w={24} $ml={15}><CloudIcon /></Tool>
        <Tool $w={23} $ml={13}><BatteryIcon /></Tool>
        <Tool $w={18} $ml={16}><WifiIcon /></Tool>
        <Tool $w={20} $ml={15}><SpeakerIcon /></Tool>
        <Clock>12:04<br />04.01.2020</Clock>
        <Tool $w={24} $ml={28}><NoticeIcon /></Tool>
        <TrayEdge />
      </Tray>
    </TaskBar>
  </Window>
);

export default App;
